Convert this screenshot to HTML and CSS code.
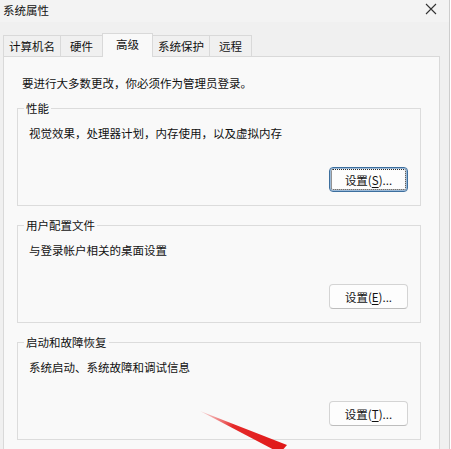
FILE: index.html
```html
<!DOCTYPE html>
<html lang="zh-CN">

<head>
    <meta charset="UTF-8">
    <meta name="viewport" content="width=device-width, initial-scale=1.0">
    <title>系统属性</title>
    <link rel="stylesheet" href="styles.css">
</head>

<body>
    <div class="window">
        <div class="titlebar">
            <span class="title">系统属性</span>
            <svg class="close" width="12" height="12" viewBox="0 0 12 12">
                <path d="M1 1 L11 11 M11 1 L1 11" stroke="#333" stroke-width="1.1" fill="none" />
            </svg>
        </div>

        <div class="tabs">
            <div class="tab">计算机名</div>
            <div class="tab">硬件</div>
            <div class="tab active">高级</div>
            <div class="tab">系统保护</div>
            <div class="tab">远程</div>
        </div>

        <div class="panel">
            <p class="intro">要进行大多数更改，你必须作为管理员登录。</p>

            <fieldset class="group">
                <legend>性能</legend>
                <div class="group-body">
                    <p class="desc">视觉效果，处理器计划，内存使用，以及虚拟内存</p>
                    <div class="actions">
                        <button class="btn focused">设置(<u>S</u>)...</button>
                    </div>
                </div>
            </fieldset>

            <fieldset class="group">
                <legend>用户配置文件</legend>
                <div class="group-body">
                    <p class="desc">与登录帐户相关的桌面设置</p>
                    <div class="actions">
                        <button class="btn">设置(<u>E</u>)...</button>
                    </div>
                </div>
            </fieldset>

            <fieldset class="group">
                <legend>启动和故障恢复</legend>
                <div class="group-body">
                    <p class="desc">系统启动、系统故障和调试信息</p>
                    <div class="actions">
                        <button class="btn">设置(<u>T</u>)...</button>
                    </div>
                </div>
            </fieldset>
        </div>
    </div>

    <!-- red annotation arrow drawn over the dialog -->
    <svg class="arrow" width="451" height="449" viewBox="0 0 451 449">
        <defs>
            <linearGradient id="arrowFade" x1="200" y1="411" x2="282" y2="449" gradientUnits="userSpaceOnUse">
                <stop offset="0" stop-color="#f08080" stop-opacity="0.3" />
                <stop offset="0.4" stop-color="#e52a2a" />
                <stop offset="1" stop-color="#e01818" />
            </linearGradient>
        </defs>
        <polygon points="200,411 287,445 280,453" fill="url(#arrowFade)" />
    </svg>
</body>

</html>
```

FILE: styles.css
```css
body {
    margin: 0;
    width: 451px;
    height: 449px;
    overflow: hidden;
    background: #ffffff;
    font-family: "Noto Sans CJK SC", "Noto Sans", sans-serif;
    font-size: 11.5px;
    color: #111111;
    position: relative;
}

.window {
    width: 449px;
    height: 449px;
    background: #f0f0f0;
    border-right: 1px solid #cdcdcd;
}

.titlebar {
    height: 22px;
    display: flex;
    justify-content: space-between;
    align-items: center;
    padding: 0 12px 2px 3px;
    box-sizing: border-box;
    background: #f3f3f3;
}

.title {
    line-height: 18px;
}

.close {
    margin-top: -2px;
}

.tabs {
    height: 34px;
    display: flex;
    align-items: flex-end;
    padding-left: 3px;
}

.tab {
    height: 21px;
    line-height: 20px;
    padding: 0 5px;
    min-width: 43px;
    box-sizing: border-box;
    text-align: center;
    border: 1px solid #d9d9d9;
    border-bottom: none;
    margin-left: -1px;
    background: #f0f0f0;
}

.tab:first-child {
    margin-left: 0;
}

.tab.active {
    height: 24px;
    line-height: 20px;
    padding: 0 13px;
    margin-bottom: -1px;
    background: #f9f9f9;
    position: relative;
    z-index: 1;
}

.panel {
    width: 437px;
    height: 400px;
    margin-left: 3px;
    box-sizing: border-box;
    background: #f9f9f9;
    border: 1px solid #d9d9d9;
    padding: 18px 18px 0 13px;
}

.intro {
    margin: 0 0 10px 5px;
    line-height: 16px;
}

.group {
    margin: 0 0 12px 0;
    padding: 0;
    min-width: 0;
    border: 1px solid #dcdcdc;
}

.group legend {
    margin-left: 6px;
    padding: 0 2px;
    line-height: 14px;
}

.group-body {
    padding: 10px 12px 13px 11px;
}

.desc {
    margin: 0;
    line-height: 16px;
}

.actions {
    display: flex;
    justify-content: flex-end;
    margin-top: 26px;
}

.btn {
    width: 79px;
    height: 25px;
    padding: 0;
    font-family: inherit;
    font-size: 11.5px;
    color: #111111;
    background: #fdfdfd;
    border: 1px solid #d4d4d4;
    border-bottom-color: #bdbdbd;
    border-radius: 4px;
}

.btn u {
    text-underline-offset: 2px;
}

.btn.focused {
    border: 1px solid #3d6f9e;
    box-shadow: inset 0 0 0 1px #9cbad8;
    outline: 1px dotted #2b2b2b;
    outline-offset: -3px;
}

.arrow {
    position: absolute;
    left: 0;
    top: 0;
    pointer-events: none;
}
```
